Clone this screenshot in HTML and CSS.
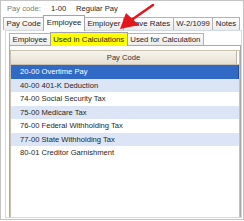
FILE: index.html
```html
<!DOCTYPE html>
<html>

<head>
    <meta charset="utf-8" />
    <title>Pay Code</title>
    <meta name="viewport" content="width=device-width, initial-scale=1">
    <link rel="stylesheet" href="styles.css">
</head>

<body>
    <div class="window">
        <div class="info">
            <span class="label">Pay code:</span>
            <span class="code">1-00</span>
            <span>Regular Pay</span>
        </div>
        <div class="tabs main-tabs">
            <div class="tab">Pay Code</div>
            <div class="tab active">Employee</div>
            <div class="tab">Employer</div>
            <div class="tab">Leave Rates</div>
            <div class="tab">W-2/1099</div>
            <div class="tab">Notes</div>
        </div>
        <div class="panel">
            <div class="tabs sub-tabs">
                <div class="tab">Employee</div>
                <div class="tab active marked">Used in Calculations</div>
                <div class="tab">Used for Calculation</div>
            </div>
            <div class="sub-panel">
                <div class="grid">
                    <div class="grid-head"><span>Pay Code</span></div>
                    <div class="row selected">20-00 Overtime Pay</div>
                    <div class="row alt">40-00 401-K Deduction</div>
                    <div class="row">74-00 Social Security Tax</div>
                    <div class="row alt">75-00 Medicare Tax</div>
                    <div class="row">76-00 Federal Withholding Tax</div>
                    <div class="row alt">77-00 State Withholding Tax</div>
                    <div class="row">80-01 Creditor Garnishment</div>
                </div>
            </div>
        </div>
        <svg class="arrow" width="244" height="221" viewBox="0 0 244 221">
            <line x1="153" y1="5" x2="130" y2="21" stroke="#e3161c" stroke-width="2.6" stroke-linecap="round" />
            <polygon points="120,29 126,13 139,25" fill="#e3161c" />
        </svg>
    </div>
</body>

</html>
```

FILE: styles.css
```css
body {
    margin: 0;
    background: #fff;
    font-family: "Liberation Sans", Arial, sans-serif;
    font-size: 7.6px;
    color: #1e1e1e;
}

.window {
    position: relative;
    width: 244px;
    height: 220px;
    box-sizing: border-box;
    border: 1px solid #c4c4c4;
    background: #fff;
    display: flex;
    flex-direction: column;
}

.info {
    height: 14px;
    display: flex;
    align-items: center;
    padding-left: 6px;
}

.info .label {
    width: 44px;
    color: #7a7a7a;
}

.info .code {
    width: 25px;
}

.tabs {
    display: flex;
    align-items: flex-end;
}

.tab {
    height: 12px;
    line-height: 12px;
    padding: 0 2.5px;
    border: 1px solid #b3b3b3;
    border-bottom: none;
    background: linear-gradient(to bottom, #fdfdfd, #ebebeb);
    white-space: nowrap;
    font-size: 7.8px;
}

.tab + .tab {
    margin-left: -1px;
}

.tab.active {
    height: 14px;
    line-height: 13px;
    background: #fff;
    border-color: #a3a3a3;
    position: relative;
    z-index: 1;
    margin-bottom: -1px;
}

.main-tabs {
    height: 15px;
    padding-left: 2px;
}

.main-tabs .tab.active {
    height: 15px;
}

.panel {
    flex: 1;
    margin: 0 1px 1px 4px;
    border: 1px solid #d3d9e0;
    display: flex;
    flex-direction: column;
    padding: 1px 0 0 0;
}

.sub-tabs {
    height: 13px;
    padding-left: 3px;
}

.sub-tabs .tab {
    height: 11px;
    line-height: 11px;
}

.sub-tabs .tab.active {
    height: 13px;
    line-height: 13px;
}

.tab.marked {
    background: #ffff00;
    border-color: #a3a3a3;
}

.sub-panel {
    flex: 1;
    margin-left: 3px;
    border: 1px solid #a9a9a9;
    border-bottom: none;
    padding: 4px 0 0 0;
    display: flex;
}

.grid {
    flex: 1;
    border: 1px solid #cbbfae;
    border-bottom: none;
    background: #fff;
}

.grid-head {
    height: 13px;
    display: flex;
    border-bottom: 1px solid #c9c2b0;
    padding-right: 2px;
}

.grid-head span {
    flex: 1;
    text-align: center;
    line-height: 13px;
    color: #333;
    background: linear-gradient(to bottom, #f7f5ef, #e6e0d2);
    border-right: 1px solid #bdb5a4;
}

.row {
    height: 13.5px;
    line-height: 13.5px;
    padding-left: 9px;
    white-space: nowrap;
}

.row.alt {
    background: #dce5f5;
}

.row.selected {
    background: #316ac5;
    color: #fff;
    border-right: 1px solid #1d4f9e;
}

.arrow {
    position: absolute;
    left: -1px;
    top: -1px;
    pointer-events: none;
}
```
